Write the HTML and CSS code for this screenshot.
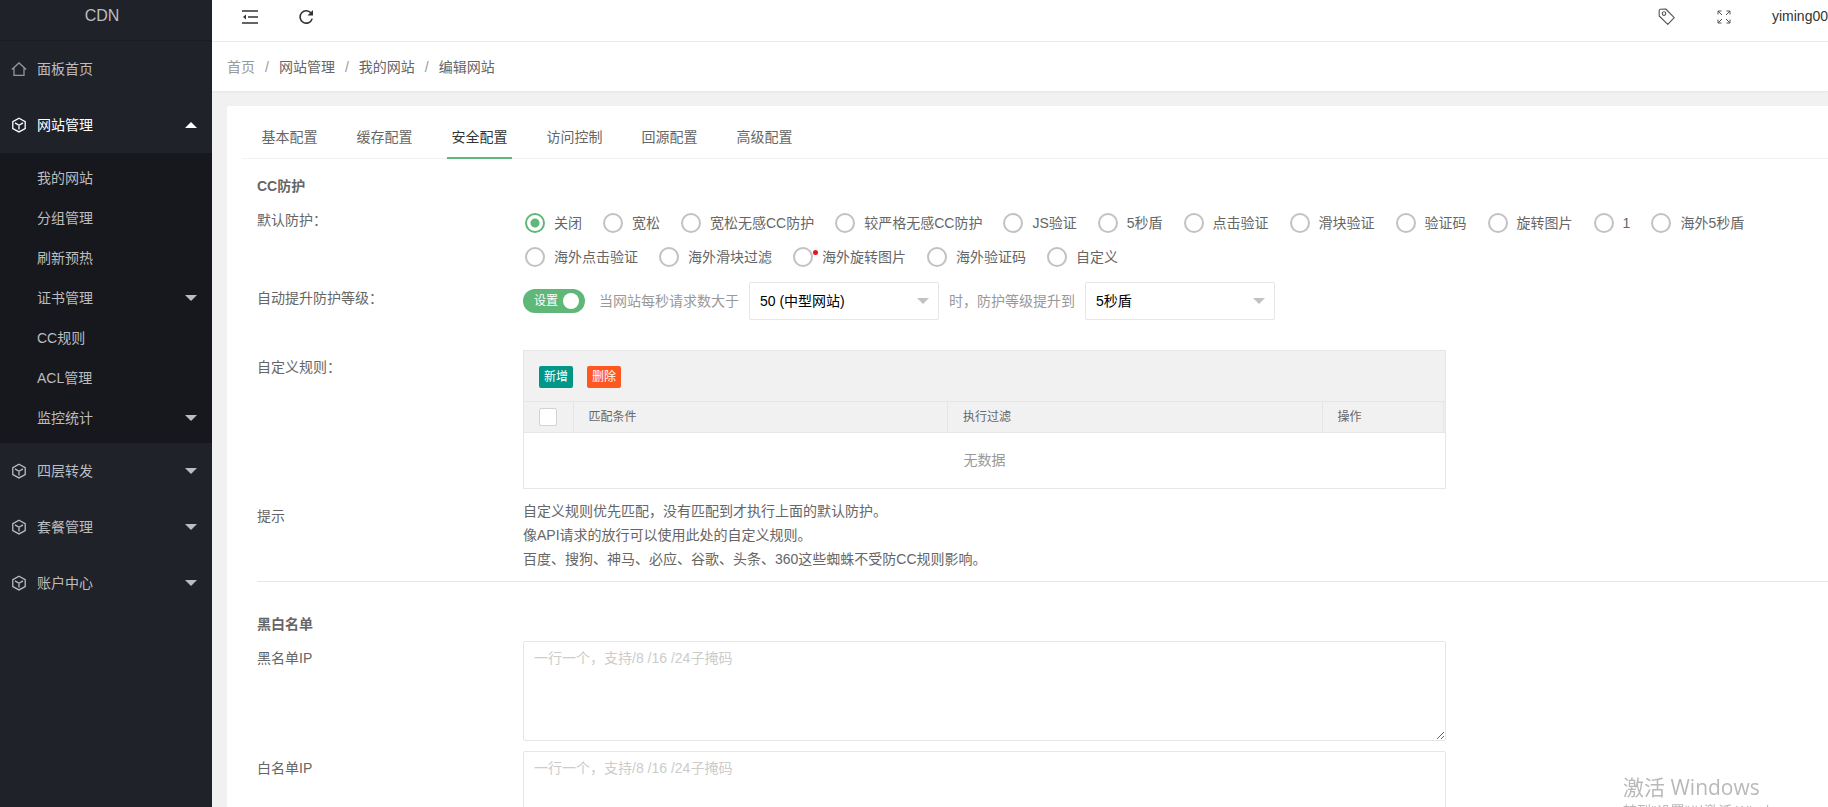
FILE: index.html
```html
<!DOCTYPE html>
<html lang="zh-CN">
<head>
<meta charset="UTF-8">
<meta name="viewport" content="width=device-width, initial-scale=1.0">
<title>编辑网站 - CDN</title>
<link rel="stylesheet" href="styles.css">
</head>
<body>
<svg class="symbols" aria-hidden="true">
  <symbol id="cube" viewBox="0 0 16 16">
    <path d="M8 1.300 14.200 4.700v6.800L8 14.900 1.800 11.500V4.700zM4 5.900 8 8.200l4-2.300M8 8.200v4.300"/>
  </symbol>
</svg>

<aside class="side">
  <div class="logo">CDN</div>
  <nav>
    <a class="nav-item" href="#">
      <svg class="nav-icon home" viewBox="0 0 16 16"><path d="M.8 8.500 8 2 15.200 8.500M3 7v7.400h10V7"/></svg>
      面板首页
    </a>
    <a class="nav-item open" href="#"><svg class="nav-icon"><use href="#cube"/></svg>网站管理<i class="caret up"></i></a>
    <div class="sub-nav">
      <a href="#">我的网站</a>
      <a href="#">分组管理</a>
      <a href="#">刷新预热</a>
      <a href="#">证书管理<i class="caret"></i></a>
      <a href="#">CC规则</a>
      <a href="#">ACL管理</a>
      <a href="#">监控统计<i class="caret"></i></a>
    </div>
    <a class="nav-item" href="#"><svg class="nav-icon"><use href="#cube"/></svg>四层转发<i class="caret"></i></a>
    <a class="nav-item" href="#"><svg class="nav-icon"><use href="#cube"/></svg>套餐管理<i class="caret"></i></a>
    <a class="nav-item" href="#"><svg class="nav-icon"><use href="#cube"/></svg>账户中心<i class="caret"></i></a>
  </nav>
</aside>

<div class="main">
  <header class="header">
    <button class="icon-btn" aria-label="侧边伸缩">
      <svg width="16" height="16" viewBox="0 0 16 16" fill="none" stroke="#333" stroke-width="1.4"><path d="M0 2h16M6 8h10M0 14h16"/><path d="M4 5.6v4.8L1 8z" fill="#333" stroke="none"/></svg>
    </button>
    <button class="icon-btn" aria-label="刷新">
      <svg width="16" height="16" viewBox="0 0 16 16" fill="none" stroke="#333" stroke-width="1.6"><path d="M13.4 4.5A6.2 6.2 0 1 0 14.2 9.6"/><path d="M15 1v5.5H9.5z" fill="#333" stroke="none"/></svg>
    </button>
    <div class="header-right">
      <button class="icon-btn" aria-label="标签">
        <svg width="18" height="18" viewBox="0 0 18 18" fill="none" stroke="#555" stroke-width="1.1"><path d="M1.200 2.200 1.900 1.200 7.800 1 16.200 9.600 9.800 16.400 1.200 8z" stroke-linejoin="round"/><circle cx="6" cy="5.600" r="1.8"/></svg>
      </button>
      <button class="icon-btn" aria-label="全屏">
        <svg width="14" height="14" viewBox="0 0 14 14" fill="none" stroke="#555" stroke-width="1"><path d="M1 4.500V1h3.500M1 1l4 4M9.500 1H13v3.500M13 1 9 5M1 9.500V13h3.500M1 13l4-4M13 9.500V13H9.500M13 13 9 9"/></svg>
      </button>
      <a class="user" href="#">yiming00</a>
    </div>
  </header>

  <nav class="breadcrumb">
    <a class="first" href="#">首页</a><span>/</span><a href="#">网站管理</a><span>/</span><a href="#">我的网站</a><span>/</span><a href="#">编辑网站</a>
  </nav>

  <div class="card">
    <div class="tabs">
      <a href="#">基本配置</a>
      <a href="#">缓存配置</a>
      <a class="active" href="#">安全配置</a>
      <a href="#">访问控制</a>
      <a href="#">回源配置</a>
      <a href="#">高级配置</a>
    </div>

    <form class="form">
      <h3>CC防护</h3>
      <div class="row">
        <div class="label">默认防护：</div>
        <div class="radios">
          <label><input type="radio" name="cc" checked>关闭</label>
          <label><input type="radio" name="cc">宽松</label>
          <label><input type="radio" name="cc">宽松无感CC防护</label>
          <label><input type="radio" name="cc">较严格无感CC防护</label>
          <label><input type="radio" name="cc">JS验证</label>
          <label><input type="radio" name="cc">5秒盾</label>
          <label><input type="radio" name="cc">点击验证</label>
          <label><input type="radio" name="cc">滑块验证</label>
          <label><input type="radio" name="cc">验证码</label>
          <label><input type="radio" name="cc">旋转图片</label>
          <label><input type="radio" name="cc">1</label>
          <label><input type="radio" name="cc">海外5秒盾</label>
          <label><input type="radio" name="cc">海外点击验证</label>
          <label><input type="radio" name="cc">海外滑块过滤</label>
          <label class="dot"><input type="radio" name="cc">海外旋转图片</label>
          <label><input type="radio" name="cc">海外验证码</label>
          <label><input type="radio" name="cc">自定义</label>
        </div>
      </div>

      <div class="row auto-row">
        <div class="label">自动提升防护等级：</div>
        <div class="auto">
          <label class="switch"><input type="checkbox" checked><span>设置</span></label>
          <label class="hint" for="qps">当网站每秒请求数大于</label>
          <span class="select"><select id="qps"><option>50 (中型网站)</option></select></span>
          <label class="hint" for="level">时，防护等级提升到</label>
          <span class="select"><select id="level"><option>5秒盾</option></select></span>
        </div>
      </div>

      <div class="row rule-row">
        <div class="label">自定义规则：</div>
        <div class="rules">
          <div class="toolbar">
            <button type="button" class="btn">新增</button>
            <button type="button" class="btn danger">删除</button>
          </div>
          <table>
            <thead>
              <tr>
                <th class="col-check"><input type="checkbox" aria-label="全选"></th>
                <th>匹配条件</th>
                <th>执行过滤</th>
                <th class="col-action">操作</th>
                <th class="col-end"></th>
              </tr>
            </thead>
            <tbody>
              <tr><td colspan="5">无数据</td></tr>
            </tbody>
          </table>
        </div>
      </div>

      <div class="row tip-row">
        <div class="label">提示</div>
        <div class="tips">
          自定义规则优先匹配，没有匹配到才执行上面的默认防护。<br>
          像API请求的放行可以使用此处的自定义规则。<br>
          百度、搜狗、神马、必应、谷歌、头条、360这些蜘蛛不受防CC规则影响。
        </div>
      </div>

      <hr>

      <h3>黑白名单</h3>
      <div class="ip-list">
        <div class="row">
          <label class="label" for="black">黑名单IP</label>
          <textarea id="black" placeholder="一行一个，支持/8 /16 /24子掩码"></textarea>
        </div>
        <div class="row">
          <label class="label" for="white">白名单IP</label>
          <textarea id="white" placeholder="一行一个，支持/8 /16 /24子掩码"></textarea>
        </div>
      </div>
    </form>
  </div>
</div>

<div class="watermark">
  <div class="watermark-title">激活 Windows</div>
  <div>转到"设置"以激活 Windows。</div>
</div>
</body>
</html>
```

FILE: styles.css
```css
* {
  box-sizing: border-box;
}

body {
  display: flex;
  height: 100vh;
  margin: 0;
  overflow: hidden;
  background-color: #f1f1f1;
  color: #666;
  font: 14px/24px "Liberation Sans", "Noto Sans CJK SC", sans-serif;
}

a {
  color: inherit;
  text-decoration: none;
}

button, input, select, textarea {
  font: inherit;
  margin: 0;
}

.symbols {
  position: absolute;
  width: 0;
  height: 0;
}

/* 侧边菜单 */
.side {
  flex: 0 0 212px;
  background-color: #20222a;
  color: #bcbdbf;
}

.logo {
  height: 41px;
  padding-right: 8px;
  border-bottom: 1px solid #1a1c22;
  font-size: 16px;
  line-height: 32px;
  text-align: center;
}

.nav-item {
  display: flex;
  align-items: center;
  gap: 10px;
  height: 56px;
  padding: 0 15px 0 11px;
}

.nav-icon {
  width: 16px;
  height: 16px;
  fill: none;
  stroke: currentColor;
  stroke-width: 1.3;
}

.nav-icon.home {
  opacity: 0.75;
}

.open {
  color: #fff;
}

.caret {
  margin-left: auto;
  border: 6px solid transparent;
  border-top-color: currentColor;
  border-bottom-width: 0;
}

.caret.up {
  border-top-width: 0;
  border-bottom: 6px solid currentColor;
}

.sub-nav {
  padding: 5px 0;
  background-color: #17181d;
}

.sub-nav a {
  display: flex;
  align-items: center;
  height: 40px;
  padding: 0 15px 0 37px;
}

/* 顶部 */
.main {
  flex: 1;
  min-width: 0;
}

.header {
  display: flex;
  align-items: flex-start;
  gap: 40px;
  height: 42px;
  padding: 8px 0 0 30px;
  border-bottom: 1px solid #ebebeb;
  background-color: #fff;
}

.header-right {
  display: flex;
  align-items: center;
  gap: 41px;
  height: 16px;
  margin-left: auto;
}

.icon-btn {
  display: flex;
  padding: 1px 0 0;
  border: none;
  background: none;
  cursor: pointer;
}

.user {
  color: #333;
}

.breadcrumb {
  display: flex;
  height: 49px;
  padding: 0 15px;
  background-color: #fff;
  box-shadow: 0 1px 2px rgba(0, 0, 0, 0.05);
  line-height: 50px;
}

.breadcrumb span {
  margin: 0 10px;
  color: #999;
}

.breadcrumb .first {
  color: #999;
}

/* 内容 */
.card {
  margin: 15px 0 0 15px;
  padding: 12px 0 0 15px;
  border-radius: 2px 0 0 0;
  background-color: #fff;
}

.tabs {
  display: flex;
  gap: 30px;
  height: 41px;
  padding-left: 15px;
  border-bottom: 1px solid #f3f3f3;
}

.tabs a {
  width: 65px;
  height: 41px;
  line-height: 38px;
  text-align: center;
}

.tabs .active {
  border-bottom: 2px solid #5fb878;
  color: #333;
}

.form {
  padding: 15px 0 0 15px;
}

h3 {
  margin: 0;
  font-size: 14px;
  line-height: 24px;
}

.row {
  display: grid;
  grid-template-columns: 266px 1fr;
  align-items: start;
}

.label {
  padding-top: 10px;
}

.radios {
  display: flex;
  flex-wrap: wrap;
  gap: 10px 21px;
  padding: 13px 0 0 2px;
}

.radios label {
  display: flex;
  align-items: center;
  gap: 9px;
}

.radios input {
  appearance: none;
  width: 20px;
  height: 20px;
  border: 2px solid #c2c2c2;
  border-radius: 50%;
}

.radios input:checked {
  border-color: #5fb878;
  background: radial-gradient(#5fb878 4px, transparent 5px);
}

.dot {
  position: relative;
}

.dot::after {
  content: "";
  position: absolute;
  top: 5px;
  left: 20px;
  width: 5px;
  height: 5px;
  border-radius: 50%;
  background-color: #e8141c;
}

.auto-row {
  padding-top: 7px;
}

.auto {
  display: flex;
  align-items: center;
  padding-top: 6px;
}

.switch {
  display: flex;
  align-items: center;
  flex-direction: row-reverse;
  justify-content: space-between;
  width: 62px;
  height: 24px;
  margin-right: 14px;
  padding: 0 6px 0 11px;
  border-radius: 12px;
  background-color: #5fb878;
  color: #fff;
  font-size: 12px;
}

.switch input {
  appearance: none;
  width: 16px;
  height: 16px;
  border-radius: 50%;
  background-color: #fff;
}

.hint {
  color: #999;
}

.select {
  position: relative;
  width: 190px;
  margin: 0 10px;
}

.select::after {
  content: "";
  position: absolute;
  top: 16px;
  right: 10px;
  border: 6px solid transparent;
  border-top-color: #c2c2c2;
  border-bottom-width: 0;
  pointer-events: none;
}

select {
  appearance: none;
  display: block;
  width: 100%;
  height: 38px;
  padding: 0 10px;
  border: 1px solid #e6e6e6;
  border-radius: 2px;
  background-color: #fff;
  color: #000;
}

.rule-row {
  padding-top: 25px;
}

.rules {
  max-width: 923px;
  margin-top: 5px;
  border: 1px solid #e6e6e6;
}

.toolbar {
  display: flex;
  gap: 14px;
  height: 50px;
  padding: 15px;
  background-color: #f1f1f1;
}

.btn {
  height: 22px;
  padding: 0 5px;
  border: none;
  border-radius: 2px;
  background-color: #009688;
  color: #fff;
  font-size: 12px;
  line-height: 22px;
}

.btn.danger {
  background-color: #ff5722;
}

table {
  width: 100%;
  border-collapse: collapse;
  table-layout: fixed;
}

th {
  height: 31px;
  padding: 0 15px;
  border: 1px solid #e6e6e6;
  border-left: none;
  background-color: #f1f1f1;
  font-size: 12px;
  font-weight: normal;
  text-align: left;
}

.col-check {
  width: 49px;
}

.col-action {
  width: 121px;
}

.col-end {
  width: 2px;
  padding: 0;
  border-right: none;
}

th input {
  appearance: none;
  display: block;
  width: 18px;
  height: 18px;
  border: 1px solid #d2d2d2;
  border-radius: 2px;
  background-color: #fff;
}

td {
  height: 55px;
  padding: 0;
  color: #999;
  text-align: center;
}

.tip-row {
  padding-top: 5px;
}

.tips {
  padding-top: 5px;
}

hr {
  height: 1px;
  margin: 10px 0 30px;
  border: none;
  background-color: #e6e6e6;
}

.ip-list {
  display: grid;
  gap: 10px;
  padding: 5px 0 10px;
}

.ip-list .label {
  padding-top: 5px;
}

textarea {
  display: block;
  width: 100%;
  max-width: 923px;
  height: 100px;
  padding: 6px 10px;
  border: 1px solid #e6e6e6;
  border-radius: 2px;
  line-height: 20px;
  resize: vertical;
}

textarea::placeholder {
  color: #ccc;
}

/* 系统水印 */
.watermark {
  position: fixed;
  right: 35px;
  bottom: -14px;
  width: 170px;
  color: #b9b9b9;
  font: 14px/20px "Open Sans", "Noto Sans CJK SC", sans-serif;
  white-space: nowrap;
  pointer-events: none;
}

.watermark-title {
  font-size: 21px;
  line-height: 28px;
}
```
